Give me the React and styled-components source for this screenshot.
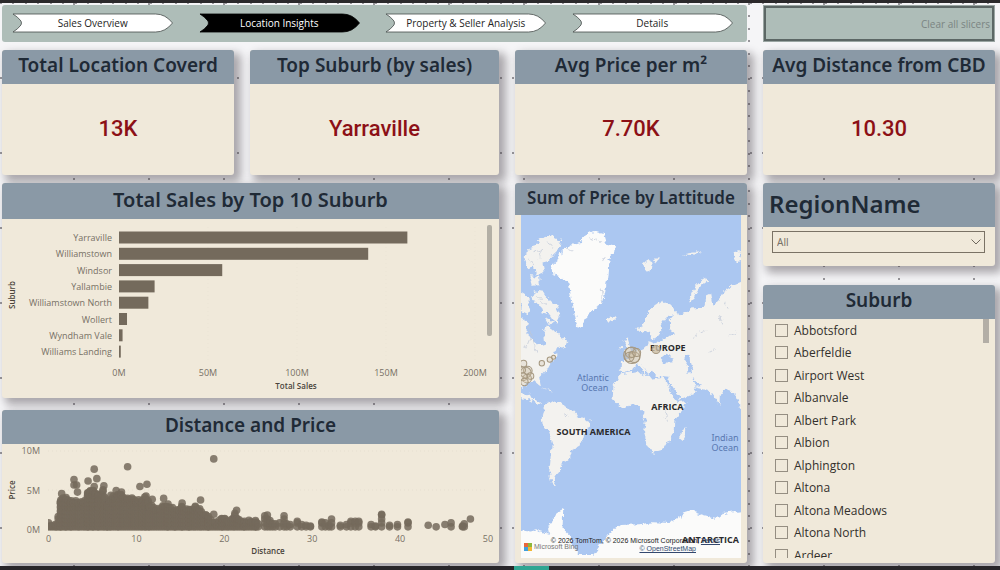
import styled, { createGlobalStyle } from "styled-components";

const GlobalStyle = createGlobalStyle`
  * {
    box-sizing: border-box;
  }

  body {
    margin: 0;
    font-family: "Noto Sans", "Open Sans", sans-serif;
    color: #252423;
  }

  h2 {
    margin: 0;
  }

  button, select, input {
    font-family: inherit;
    margin: 0;
  }
`;

const Page = styled.div`
  display: flex;
  flex-direction: column;
  min-height: 100vh;
`;

const TopEdge = styled.div`
  height: 3px;
  background: #2b292b;
`;

const BottomEdge = styled.div`
  display: grid;
  grid-template-columns: 514fr 35fr 451fr;
  height: 4px;
  background: #28262a;
`;

const ActiveTab = styled.div`
  grid-column: 2;
  background: #2fa592;
`;

/* dotted snap grid of the report canvas */
const dot = "radial-gradient(circle at 1px 1px, #98969b 0 1px, transparent 1px)";

const Canvas = styled.main`
  flex: 1;
  display: grid;
  grid-template-columns: 497fr 232fr 232fr;
  grid-template-rows: 37px 125px 1fr;
  column-gap: 16px;
  row-gap: 8px;
  padding: 2px 5px 3px 2px;
  background-color: #f5f5f7;
  background-image: ${dot}, ${dot}, ${dot}, ${dot};
  background-size: 75px 25px, 75px 25px, 25px 75px, 25px 75px;
  background-position: -2px 0, -2px 12px, 0 74px, 12px 74px;
`;

const NavBar = styled.nav`
  grid-column: span 2;
  display: grid;
  grid-template-columns: repeat(4, 1fr);
  gap: 25px;
  align-items: center;
  padding: 0 14px 2px 10px;
  border-radius: 3px;
  background: #aebdb8;
`;

const NavButton = styled.button`
  position: relative;
  height: 20px;
  padding: 0;
  border: 0;
  background: none;
  color: ${({ $active }) => ($active ? "#fff" : "#252423")};
  font-family: "Open Sans", sans-serif;
  font-size: 10px;
  line-height: 20px;
  cursor: pointer;
`;

const Arrow = styled.svg`
  position: absolute;
  inset: 0;
  width: 100%;
  height: 100%;
`;

const NavText = styled.span`
  position: relative;
`;

const ClearButton = styled.button`
  margin: 1px;
  padding: 0 2px;
  border: 2px solid #5c6765;
  background: #aebdb8;
  color: #7a8482;
  font-family: "Open Sans", sans-serif;
  font-size: 10px;
  text-align: right;
  box-shadow: 0 0 0 1px #9aa5a2;
`;

const Panel = styled.section`
  display: flex;
  flex-direction: column;
  min-width: 0;
  border-radius: 3px;
  background: #f0e9da;
  box-shadow: 5px 5px 9px 2px rgba(60, 52, 60, 0.4);
  ${({ $grow }) => $grow && "flex: 1;"}
`;

const PanelTitle = styled.h2`
  height: ${({ $height }) => $height || 34}px;
  padding: ${({ $left }) => ($left ? "0 6px" : "0")};
  border-radius: 3px 3px 0 0;
  background: #8a99a6;
  color: #1f2a36;
  font-size: ${({ $size }) => $size || 19}px;
  font-weight: 600;
  line-height: ${({ $height }) => ($height || 34) - 3}px;
  text-align: ${({ $left }) => ($left ? "left" : "center")};
  white-space: nowrap;
`;

const KpiPair = styled.div`
  display: grid;
  grid-template-columns: 232fr 249fr;
  gap: 16px;
`;

const KpiValue = styled.div`
  flex: 1;
  display: flex;
  align-items: center;
  justify-content: center;
  padding-bottom: 2px;
  color: #8c1016;
  font-family: Roboto, sans-serif;
  font-size: 22px;
  font-weight: 500;
`;

const Stack = styled.div`
  display: flex;
  flex-direction: column;
  gap: ${({ $gap }) => $gap}px;
  min-width: 0;
`;

const Chart = styled.svg`
  display: block;
  width: 100%;
  height: auto;
`;

const MapFrame = styled.div`
  position: relative;
  flex: 1 1 0;
  min-height: 300px;
  margin: 0 6px 5px;
  overflow: hidden;
`;

const MapSvg = styled.svg`
  position: absolute;
  inset: 0;
  width: 100%;
  height: 100%;
`;

const BingLogo = styled.div`
  position: absolute;
  left: 3px;
  bottom: 6px;
  display: flex;
  align-items: center;
  gap: 2px;
  color: #777;
  font-family: "Liberation Sans", sans-serif;
  font-size: 7px;
  line-height: 10px;
`;

const Attribution = styled.div`
  position: absolute;
  right: 21px;
  bottom: 5px;
  color: #222;
  font-family: "Liberation Sans", sans-serif;
  font-size: 7px;
  line-height: 8px;
  text-align: right;
  white-space: nowrap;

  a {
    color: #33486e;
  }
`;

const MapCredit = styled.div`
  padding-right: 24px;
`;

const SelectWrap = styled.label`
  position: relative;
  display: block;
  margin: 4px 10px 13px 9px;

  svg {
    position: absolute;
    right: 4px;
    top: 7px;
    pointer-events: none;
  }
`;

const RegionSelect = styled.select`
  display: block;
  width: 100%;
  height: 22px;
  padding: 0 4px;
  border: 1px solid #7a7265;
  border-radius: 0;
  appearance: none;
  background: transparent;
  color: #777168;
  font-size: 10px;
`;

const ListBody = styled.div`
  flex: 1 1 0;
  display: flex;
  min-height: 200px;
  margin: 0 6px 5px 12px;
  overflow: hidden;
`;

const SuburbList = styled.ul`
  flex: 1;
  display: grid;
  grid-auto-rows: 22px 23px;
  margin: 0;
  padding: 0;
  list-style: none;
`;

const SuburbLabel = styled.label`
  display: flex;
  align-items: center;
  gap: 6px;
  height: 100%;
  color: #33302c;
  font-family: "Open Sans", sans-serif;
  font-size: 12px;
`;

const CheckBox = styled.input`
  width: 13px;
  height: 13px;
  border: 1px solid #958e82;
  appearance: none;

  &:checked {
    background: #746a5c;
  }
`;

const ScrollThumb = styled.div`
  width: 6px;
  height: 24px;
  background: #b3aea6;
`;

const navItems = ["Sales Overview", "Location Insights", "Property & Seller Analysis", "Details"];

const sales = [
  ["Yarraville", 162],
  ["Williamstown", 140],
  ["Windsor", 58],
  ["Yallambie", 20],
  ["Williamstown North", 16.5],
  ["Wollert", 4.5],
  ["Wyndham Vale", 2],
  ["Williams Landing", 1],
];

const suburbs = [
  "Abbotsford",
  "Aberfeldie",
  "Airport West",
  "Albanvale",
  "Albert Park",
  "Albion",
  "Alphington",
  "Altona",
  "Altona Meadows",
  "Altona North",
  "Ardeer",
];

// [distance, highest price in M] of the dense part of the cloud
const envelope = [
  [0, 0.9], [0.5, 0.6], [0.9, 0.9], [1.1, 1.7], [1.4, 4.2], [2, 4.1], [2.6, 3.8], [3.5, 3.6],
  [4.2, 3.8], [4.5, 5.1], [5.1, 5], [5.7, 4.6], [6.2, 5.1], [6.4, 4.3], [6.7, 3.2], [7.1, 4.4],
  [8, 4.6], [9, 4.1], [10, 4], [10.7, 3.8], [11.1, 4.7], [11.5, 3.2], [12.5, 2.8], [13.6, 3.4],
  [14.4, 2.5], [15.2, 3], [16, 2.6], [16.7, 3.1], [17.4, 2.5], [18.2, 1.7], [19.2, 0.9],
  [19.8, 1.8], [20.5, 1.1], [21.2, 2.2], [21.7, 1.3], [22.3, 1.2], [23.6, 1.3], [23.9, 0.7],
];

const stacks = [
  [24.6, 1.8], [24.9, 1.9], [25.2, 1.2], [25.5, 0.8], [25.8, 0.8], [26.3, 0.9], [26.8, 1.8],
  [27.1, 0.8], [27.5, 0.7], [28.3, 1.1], [28.8, 0.7], [29.3, 0.6], [29.8, 0.5], [31.1, 1],
  [31.5, 0.9], [31.9, 0.6], [32.2, 1.4], [33.2, 0.6], [33.9, 0.7], [34.4, 1.1], [34.9, 1.1],
  [35.3, 1.1], [36.7, 0.7], [37.2, 0.5], [37.9, 2], [38.8, 0.6], [39.7, 0.7], [40.9, 1],
  [45.8, 0.9], [47.1, 0.5], [47.3, 0.8],
];

const outliers = [
  [5.2, 7.7], [9, 8], [18.8, 9], [2.9, 6.4], [2.9, 5.7], [3.2, 5.7], [4.5, 6.2], [5.5, 6.5],
  [3.3, 4.8], [10.4, 5.5], [11.2, 5.8], [11.8, 3.9], [13.1, 4], [15.2, 3.4], [17.3, 3.8],
  [18.8, 2], [6.3, 5.6], [7.7, 5], [8.3, 4.8], [1.5, 4.6], [21.4, 2.5], [5.2, 5.5],
  [43.2, 0.6], [44.1, 0.4], [45.1, 0.7], [48, 1.4],
];

const column = ([distance, top]) => {
  const points = [];
  for (let price = 0.4; price < top; price += 0.5) {
    points.push([distance, price]);
  }
  points.push([distance, top]);
  return points;
};

const denseColumns = () => {
  const result = [];
  for (let i = 0; i < envelope.length - 1; i += 1) {
    const [x1, y1] = envelope[i];
    const [x2, y2] = envelope[i + 1];
    for (let x = x1; x < x2; x += 0.25) {
      const dip = ((result.length * 7) % 5) * 0.1;
      const top = y1 + ((y2 - y1) * (x - x1)) / (x2 - x1);
      result.push([x, Math.max(0.5, top - dip)]);
    }
  }
  return result;
};

const scatter = [...denseColumns(), ...stacks].flatMap(column).concat(outliers);

const BarChart = function() {
  return (
    <Chart viewBox="0 0 497 179" role="img" aria-label="Total Sales by Top 10 Suburb">
      <g stroke="#ebe4d5" strokeDasharray="1 3">
        {[206, 295, 384, 473].map((x) => (
          <line key={x} x1={x} x2={x} y1="8" y2="144" />
        ))}
      </g>
      <g fontSize="9" fill="#777065" fontFamily="Open Sans, sans-serif">
        {sales.map(([name, value], i) => (
          <g key={name}>
            <text x="110" y={22 + i * 16.3} textAnchor="end">{name}</text>
            <rect x="117" y={12.5 + i * 16.3} width={value * 1.78} height="12" fill="#746a5c" />
          </g>
        ))}
        {[0, 50, 100, 150, 200].map((tick) => (
          <text key={tick} x={117 + tick * 1.78} y="157" textAnchor="middle">{tick}M</text>
        ))}
      </g>
      <g fontSize="8" fontWeight="600" fill="#4a443b" textAnchor="middle" fontFamily="Open Sans, sans-serif">
        <text x="294" y="170">Total Sales</text>
        <text transform="translate(13 76) rotate(-90)">Suburb</text>
      </g>
      <rect x="485" y="6" width="5" height="111" rx="2" fill="#b3afa5" />
    </Chart>
  );
};

const ScatterChart = function() {
  return (
    <Chart viewBox="0 0 497 118" role="img" aria-label="Distance and Price">
      <clipPath id="plot">
        <rect x="46" y="0" width="445" height="87" />
      </clipPath>
      <g stroke="#e6dfd0" strokeDasharray="1 3">
        <line x1="46" x2="486" y1="7" y2="7" />
        <line x1="46" x2="486" y1="46" y2="46" />
      </g>
      <g clipPath="url(#plot)" fill="#746a5c" fillOpacity="0.85">
        {scatter.map(([distance, price], i) => (
          <circle key={i} cx={46.5 + distance * 8.79} cy={86 - price * 7.9} r="3.8" />
        ))}
      </g>
      <g fontSize="9" fill="#777065" fontFamily="Open Sans, sans-serif">
        {[0, 5, 10].map((tick) => (
          <text key={tick} x="38" y={89 - tick * 7.9} textAnchor="end">{tick}M</text>
        ))}
        {[0, 10, 20, 30, 40, 50].map((tick) => (
          <text key={tick} x={46.5 + tick * 8.79} y="98" textAnchor="middle">{tick}</text>
        ))}
      </g>
      <g fontSize="8" fontWeight="600" fill="#4a443b" textAnchor="middle" fontFamily="Open Sans, sans-serif">
        <text x="266" y="110">Distance</text>
        <text transform="translate(13 46) rotate(-90)">Price</text>
      </g>
    </Chart>
  );
};

const bubbles = [
  [378, 540, 25], [374, 532, 16], [385, 546, 16], [370, 545, 14], [378, 538, 9], [392, 532, 12],
  [53, 565, 10], [66, 586, 13], [60, 592, 16], [64, 610, 13], [52, 604, 12],
  [74, 602, 10], [56, 620, 11], [108, 564, 8], [132, 553, 8], [143, 546, 6], [50, 584, 9],
];

const WorldMap = function() {
  return (
    <MapSvg viewBox="45 120 660 1027" preserveAspectRatio="xMidYMid slice" role="img" aria-label="Sum of Price by Lattitude">
      <filter id="coast" x="-5%" y="-5%" width="110%" height="110%">
        <feTurbulence type="fractalNoise" baseFrequency="0.06" numOctaves="3" seed="4" />
        <feDisplacementMap in="SourceGraphic" scale="20" xChannelSelector="R" yChannelSelector="G" />
      </filter>
      <rect x="45" y="120" width="660" height="1027" fill="#abc7f1" />
      <g filter="url(#coast)" fill="#f3f2ef">
        <g fill="#fbfbfa">
          <path d="M168 228L200 206L228 200L235 182L262 168L292 178L300 205L330 212L327 232L308 250L305 300L298 350L290 385L262 405L240 425L228 455L214 452L205 410L195 360L188 325L165 305L140 295L135 275L160 255Z" />
          <path d="M20 1062L75 1068L90 1063L130 1075L125 1052L145 1040L152 1010L172 1000L170 1060L195 1085L205 1122L220 1138L262 1138L285 1105L308 1075L345 1048L400 1046L440 1040L490 1042L530 1016L555 1008L590 1020L630 1030L650 1015L730 1003L730 1170L20 1170Z" />
        </g>
        <path d="M58 240L72 215L95 208L105 190L135 180L166 195L160 222L142 238L128 258L110 262L116 290L92 298L85 275L66 280L56 262Z" />
        <path d="M70 300L100 305L102 330L78 332ZM86 345L112 350L130 372L150 392L162 418L150 445L134 420L112 412L104 390L90 385L76 365ZM46 350L66 362L74 398L64 420L44 410ZM120 430L145 440L132 450Z" />
        <path d="M20 440L46 428L66 440L62 470L76 492L98 512L118 505L114 470L122 448L140 462L158 480L185 500L180 513L155 520L140 530L155 540L135 560L122 585L100 606L106 634L98 628L86 618L62 626L50 634L20 640Z" />
        <path d="M20 648L54 658L72 655L80 670L106 682L98 688L68 672L20 665Z" />
        <path d="M108 636L142 648L128 646Z" />
        <path d="M108 725L115 692L138 678L168 682L180 696L200 706L215 722L252 736L256 748L236 775L228 804L206 818L190 850L168 864L162 884L148 900L144 915L154 930L138 925L130 895L134 850L138 800L130 772L110 748Z" />
        <path d="M345 597L395 588L408 600L425 598L434 610L470 605L486 628L500 662L515 680L541 677L530 702L508 734L506 765L486 795L470 824L440 832L426 810L414 770L420 735L408 706L398 692L375 690L345 697L320 670L322 640L335 612Z" />
        <path d="M525 768L538 758L536 780L527 797L519 790Z" />
        <path d="M345 555L372 552L366 540L398 524L424 512L430 498L445 505L472 494L500 475L490 462L488 432L500 430L498 405L522 420L560 400L590 396L600 362L615 355L622 392L642 370L652 348L680 330L730 310L730 710L702 700L690 662L672 646L658 640L641 662L640 692L626 668L610 646L586 640L566 636L572 650L550 660L518 674L502 650L482 622L488 604L446 600L436 586L430 600L418 580L402 562L424 590L414 600L396 568L386 570L378 588L354 592L344 584Z" />
        <path d="M394 462L408 452L430 406L465 378L500 394L508 412L480 428L464 450L466 470L450 490L438 488L430 466L404 474Z" />
        <path d="M354 535L362 518L352 500L364 486L372 512L380 530ZM342 518L350 508L352 522Z" />
        <ellipse cx="315" cy="430" rx="14" ry="9" />
        <path d="M408 268L424 254L440 262L436 288L424 292ZM440 250L462 250L450 266ZM526 238L560 240L592 232L562 232ZM682 232L700 228L706 260L690 266Z" />
        <path d="M550 382Q550 336 602 308L606 314Q568 340 562 374Z" />
      </g>
      <g filter="url(#coast)" fill="#abc7f1">
        <path d="M462 552L480 538L505 552L500 562L470 562Z" />
        <path d="M534 545L550 540L552 560L560 590L544 592L542 568Z" />
        <path d="M556 606L572 626L586 632L568 634Z" />
        <path d="M476 610L484 610L522 668L514 670Z" />
        <path d="M468 470L486 440L490 470L476 486Z" />
      </g>
      <g filter="url(#coast)" fill="none" stroke="#bcc6d6" strokeWidth="2">
        <path d="M80 230L110 225L100 250M120 200L140 215M84 270L70 250M90 360L120 390M180 222L200 228M250 188L285 200M296 240L290 262M286 340L290 380" />
        <path d="M580 470L600 466M640 420L650 445M560 490L575 480M610 530L625 520M668 480L690 470M655 380L668 400M480 705L486 740M474 725L480 735M172 715L185 722M80 470L60 520M70 450L95 540" />
      </g>
      <g fill="#cdbfa6" fillOpacity="0.28" stroke="#a5977f" strokeWidth="3">
        {bubbles.map(([x, y, r]) => (
          <circle key={`${x}-${y}`} cx={x} cy={y} r={r} />
        ))}
      </g>
      <g fontFamily="Open Sans, sans-serif" fontSize="27" fontWeight="700" fill="#2a2a2c">
        <text x="432" y="528">EUROPE</text>
        <text x="436" y="705">AFRICA</text>
        <text x="152" y="780">SOUTH AMERICA</text>
        <text x="528" y="1101">ANTARCTICA</text>
      </g>
      <circle cx="450" cy="523" r="12" fill="#cdbfa6" fillOpacity="0.8" stroke="#a5977f" strokeWidth="3" />
      <g fontFamily="Noto Sans, sans-serif" fontSize="27" fill="#5877b0">
        <text x="213" y="616">Atlantic</text>
        <text x="226" y="646">Ocean</text>
        <text x="616" y="796">Indian</text>
        <text x="616" y="826">Ocean</text>
      </g>
    </MapSvg>
  );
};

const NavArrow = function({ active }) {
  return (
    <Arrow viewBox="0 0 162 20" preserveAspectRatio="none">
      <path
        d="M1 1H144Q154 1 161 10Q154 19 144 19H1Q6 16 9 12Q10 10 9 8Q6 4 1 1Z"
        fill={active ? "#000" : "#fff"}
        stroke={active ? "#000" : "#454b4a"}
        strokeWidth="0.8"
      />
    </Arrow>
  );
};

const Kpi = function({ title, value }) {
  return (
    <Panel>
      <PanelTitle>{title}</PanelTitle>
      <KpiValue>{value}</KpiValue>
    </Panel>
  );
};

const App = function() {
  return (
    <>
      <GlobalStyle />
      <Page>
        <TopEdge />
        <Canvas>
          <NavBar>
            {navItems.map((item) => {
              const active = item === "Location Insights";
              return (
                <NavButton key={item} type="button" $active={active}>
                  <NavArrow active={active} />
                  <NavText>{item}</NavText>
                </NavButton>
              );
            })}
          </NavBar>
          <ClearButton type="button">Clear all slicers</ClearButton>

          <KpiPair>
            <Kpi title="Total Location Coverd" value="13K" />
            <Kpi title="Top Suburb (by sales)" value="Yarraville" />
          </KpiPair>
          <Kpi title="Avg Price per m²" value="7.70K" />
          <Kpi title="Avg Distance from CBD" value="10.30" />

          <Stack $gap={12}>
            <Panel>
              <PanelTitle $height={36} $size={20}>Total Sales by Top 10 Suburb</PanelTitle>
              <BarChart />
            </Panel>
            <Panel $grow>
              <PanelTitle>Distance and Price</PanelTitle>
              <ScatterChart />
            </Panel>
          </Stack>

          <Panel>
            <PanelTitle $height={32} $size={17}>Sum of Price by Lattitude</PanelTitle>
            <MapFrame>
              <WorldMap />
              <BingLogo>
                <svg width="8" height="8" viewBox="0 0 8 8">
                  <rect width="4" height="4" fill="#e8663c" />
                  <rect x="4" width="4" height="4" fill="#8db83a" />
                  <rect y="4" width="4" height="4" fill="#3f9fdc" />
                  <rect x="4" y="4" width="4" height="4" fill="#f2b632" />
                </svg>
                Microsoft Bing
              </BingLogo>
              <Attribution>
                © 2026 TomTom, © 2026 Microsoft Corporation, <a href="#terms">Terms</a>
                <MapCredit>
                  <a href="#osm">© OpenStreetMap</a>
                </MapCredit>
              </Attribution>
            </MapFrame>
          </Panel>

          <Stack $gap={19}>
            <Panel>
              <PanelTitle $height={44} $size={24} $left>RegionName</PanelTitle>
              <SelectWrap>
                <RegionSelect aria-label="RegionName">
                  <option>All</option>
                </RegionSelect>
                <svg width="10" height="8" viewBox="0 0 10 8" fill="none" stroke="#6f685d">
                  <path d="M0.5 1.5L5 6L9.5 1.5" />
                </svg>
              </SelectWrap>
            </Panel>
            <Panel $grow>
              <PanelTitle>Suburb</PanelTitle>
              <ListBody>
                <SuburbList>
                  {suburbs.map((name) => (
                    <li key={name}>
                      <SuburbLabel>
                        <CheckBox type="checkbox" />
                        {name}
                      </SuburbLabel>
                    </li>
                  ))}
                </SuburbList>
                <ScrollThumb />
              </ListBody>
            </Panel>
          </Stack>
        </Canvas>
        <BottomEdge>
          <ActiveTab />
        </BottomEdge>
      </Page>
    </>
  );
};

export default App;
